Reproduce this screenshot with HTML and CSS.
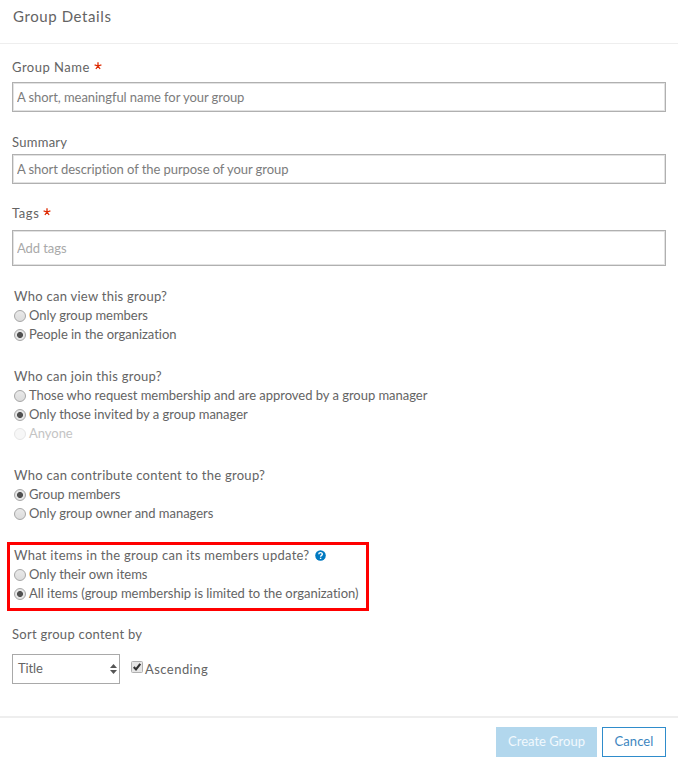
FILE: index.html
```html
<!DOCTYPE html>
<html lang="en">
<head>
    <meta charset="UTF-8">
    <meta name="viewport" content="width=device-width, initial-scale=1.0">
    <title>Group Details</title>
    <link rel="stylesheet" href="styles.css">
</head>
<body>
    <header class="dialog-header">
        <h1>Group Details</h1>
    </header>

    <form class="group-form">
        <div class="field field-name">
            <label for="groupName">Group Name
                <svg class="required" viewBox="0 0 8 8"><path d="M4 4V0.3M4 4L0.6 2.9M4 4L7.4 2.9M4 4L1.9 7M4 4L6.1 7"/></svg>
            </label>
            <input type="text" id="groupName" placeholder="A short, meaningful name for your group">
        </div>
        <div class="field field-summary">
            <label for="summary">Summary</label>
            <input type="text" id="summary" placeholder="A short description of the purpose of your group">
        </div>
        <div class="field field-tags">
            <label for="tags">Tags
                <svg class="required" viewBox="0 0 8 8"><path d="M4 4V0.3M4 4L0.6 2.9M4 4L7.4 2.9M4 4L1.9 7M4 4L6.1 7"/></svg>
            </label>
            <input type="text" id="tags" placeholder="Add tags">
        </div>

        <div class="options options-view">
            <p>Who can view this group?</p>
            <label><input type="radio" name="view"><span>Only group members</span></label>
            <label><input type="radio" name="view" checked><span>People in the organization</span></label>
        </div>
        <div class="options options-join">
            <p>Who can join this group?</p>
            <label><input type="radio" name="join"><span>Those who request membership and are approved by a group manager</span></label>
            <label><input type="radio" name="join" checked><span>Only those invited by a group manager</span></label>
            <label class="disabled"><input type="radio" name="join" disabled><span>Anyone</span></label>
        </div>
        <div class="options options-contribute">
            <p>Who can contribute content to the group?</p>
            <label><input type="radio" name="contribute" checked><span>Group members</span></label>
            <label><input type="radio" name="contribute"><span>Only group owner and managers</span></label>
        </div>
        <div class="options options-update">
            <p>What items in the group can its members update?
                <svg class="help" viewBox="0 0 11 11"><circle cx="5.5" cy="5.5" r="5.3"/><path d="M3.8 4.3C3.8 2.1 7.3 2.1 7.3 4.2C7.3 5.4 5.6 5.3 5.6 6.7M5.6 7.8V9.1"/></svg>
            </p>
            <label><input type="radio" name="update"><span>Only their own items</span></label>
            <label><input type="radio" name="update" checked><span>All items (group membership is limited to the organization)</span></label>
        </div>

        <div class="sort">
            <p>Sort group content by</p>
            <div class="sort-row">
                <div class="select">
                    <span>Title</span>
                    <svg viewBox="0 0 7 10"><path d="M0 4L3.5 0L7 4ZM0 6L3.5 10L7 6Z"/></svg>
                </div>
                <label class="check">
                    <svg viewBox="0 0 12 12"><rect x="0.5" y="0.5" width="11" height="11" rx="1"/><path d="M2.8 6L5 8.4L9.3 2.8"/></svg>
                    <span>Ascending</span>
                </label>
            </div>
        </div>
    </form>

    <footer class="dialog-footer">
        <button class="btn btn-primary" disabled>Create Group</button>
        <button class="btn">Cancel</button>
    </footer>
</body>
</html>
```
FILE: styles.css
```css
*, *::before, *::after {
    box-sizing: border-box;
}

body {
    margin: 0;
    background: #fff;
    color: #646464;
    font-family: Lato, "Liberation Sans", sans-serif;
    font-size: 13px;
    letter-spacing: 0.27px;
}

h1, p {
    margin: 0;
    font-weight: normal;
}

.dialog-header {
    height: 44px;
    padding: 6px 13px 0;
    border-bottom: 1px solid #eee;
}

.dialog-header h1 {
    font-size: 15px;
    line-height: 20px;
    letter-spacing: 0.6px;
}

.group-form {
    height: 672px;
    padding: 13px 12px 0;
}

.field label {
    display: block;
    height: 20px;
    line-height: 20px;
}

.field input {
    display: block;
    width: 654px;
    height: 30px;
    padding: 0 4px;
    border: 1px solid #b0b0b0;
    box-shadow: inset 0 0 0 1px #e2e2e2;
    outline: none;
    background: #fff;
    font: inherit;
    letter-spacing: -0.07px;
}

.field input::placeholder {
    color: #7c7c7c;
}

.field-name label {
    letter-spacing: 0.5px;
}

.field-name input {
    margin-top: 5px;
}

.field-summary {
    margin-top: 20px;
}

.field-summary input {
    margin-top: 2px;
}

.field-tags {
    margin-top: 19px;
}

.field-tags label {
    letter-spacing: 0.6px;
}

.field-tags input {
    height: 36px;
    margin-top: 7px;
}

.field-tags input::placeholder {
    color: #a9a9a9;
}

.required {
    width: 8px;
    height: 8px;
    vertical-align: 2px;
    fill: none;
    stroke: #de2900;
    stroke-width: 1.3;
}

.options {
    position: relative;
    margin: 20px 2px 22px;
}

.options + .options {
    margin-top: 0;
}

.options p {
    line-height: 20px;
}

.options label {
    display: flex;
    align-items: center;
    height: 19px;
    line-height: 19px;
    letter-spacing: -0.03px;
}

.options input {
    appearance: none;
    flex: none;
    width: 12px;
    height: 12px;
    margin: 1px 3px 0 0;
    border: 1px solid #a6a6a6;
    border-radius: 50%;
    background: linear-gradient(#e9e9e9, #dcdcdc);
}

.options input:checked {
    background: radial-gradient(circle, #505050 2.6px, #e6e6e6 3.4px);
}

.options .disabled {
    color: #c4c4c4;
}

.options .disabled input {
    border-color: #e6e6e6;
    background: #f7f7f7;
}

.options-update {
    margin-bottom: 21px;
}

/* red callout frame around the update question */
.options-update::after {
    content: '';
    position: absolute;
    top: -3px;
    left: -7px;
    width: 362px;
    height: 69px;
    border: 3px solid #f00;
}

.help {
    width: 11px;
    height: 11px;
    margin-left: 2px;
    vertical-align: -1px;
    fill: #0079c1;
}

.help path {
    fill: none;
    stroke: #fff;
    stroke-width: 1.4;
}

.sort p {
    line-height: 20px;
}

.sort-row {
    display: flex;
    margin-top: 10px;
}

.select {
    display: flex;
    align-items: center;
    justify-content: space-between;
    width: 108px;
    height: 30px;
    padding: 0 2px 3px 5px;
    border: 1px solid #a9a9a9;
    letter-spacing: -0.1px;
}

.select svg {
    width: 7px;
    height: 10px;
    margin-top: 3px;
    fill: #555;
}

.check {
    display: flex;
    height: 30px;
    margin-left: 11px;
    line-height: 30px;
    letter-spacing: 0.45px;
}

.check svg {
    width: 12px;
    height: 12px;
    margin: 7px 2px 0 0;
    fill: #e6e6e6;
    stroke: #b0b0b0;
}

.check path {
    fill: none;
    stroke: #333;
    stroke-width: 2.2;
}

.dialog-footer {
    display: flex;
    justify-content: flex-end;
    gap: 5px;
    padding: 9px 12px 0;
    border-top: 2px solid #eee;
}

.btn {
    width: 64px;
    height: 30px;
    padding: 0 0 2px;
    border: 1px solid #2f8ccb;
    background: #fff;
    color: #3d86c0;
    font: inherit;
    letter-spacing: 0.1px;
}

.btn-primary {
    width: 101px;
    border-color: #b2d7ed;
    background: #b2d7ed;
    color: #f2f9fd;
    letter-spacing: 0;
}
```
